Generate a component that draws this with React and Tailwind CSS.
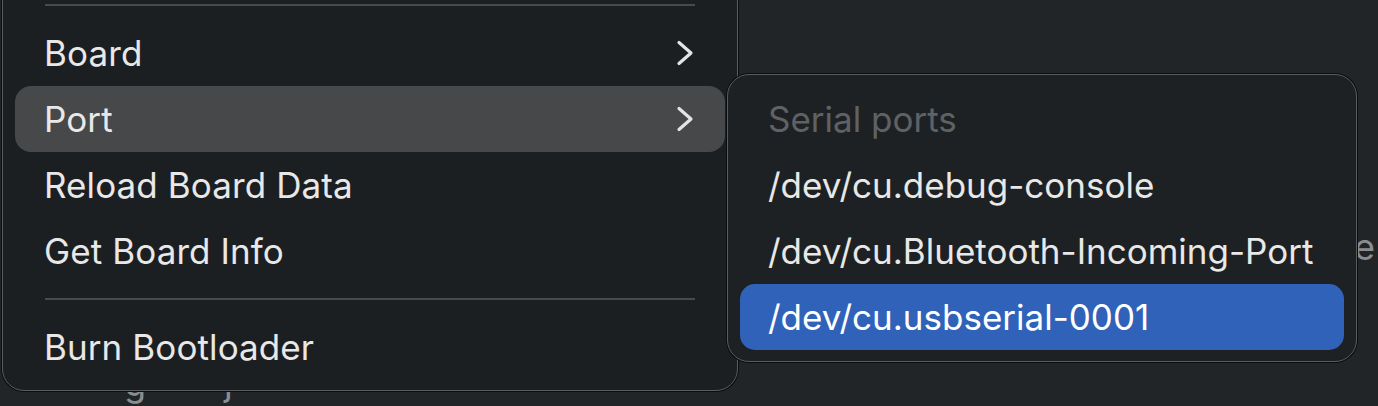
const font = { fontFamily: 'Inter, "Noto Sans", sans-serif' };

function Chevron() {
  return (
    <svg width="18" height="28" viewBox="0 0 18 28" fill="none" stroke="#e4e4e4" strokeWidth="3.2" strokeLinecap="round" strokeLinejoin="round">
      <path d="M3 3.5 L15 14 L3 24.5" />
    </svg>
  );
}

function Separator() {
  return (
    <div className="py-[14px] px-[30px]">
      <div className="h-[2px] bg-[#47494b]"></div>
    </div>
  );
}

function MenuRow({ label, submenu, active }) {
  return (
    <div
      className={
        'flex h-[66px] items-center justify-between rounded-[16px] pl-[29px] pr-[31px] ' +
        (active ? 'bg-[#46484a]' : '')
      }
    >
      <span className="text-[35px] tracking-[0.1px] text-[#e8e8e8]">{label}</span>
      {submenu && <Chevron />}
    </div>
  );
}

function PortRow({ label, selected }) {
  return (
    <div
      className={
        'flex h-[66px] items-center rounded-[15px] pl-[28px] ' +
        (selected ? 'bg-[#2f62b8] text-white' : 'text-[#e8e8e8]')
      }
    >
      <span className="text-[35px] tracking-[0px]">{label}</span>
    </div>
  );
}

export default function App() {
  const ports = ['/dev/cu.debug-console', '/dev/cu.Bluetooth-Incoming-Port', '/dev/cu.usbserial-0001'];

  return (
    <div className="relative h-[406px] w-[1378px] overflow-hidden bg-[#222527]" style={font}>
      {/* window content behind the menus */}
      <div className="absolute left-[360px] top-[120px] h-[90px] w-[160px] rounded-full bg-[#3a2f1c] opacity-60 blur-2xl"></div>
      <span className="absolute left-[1354px] top-[220px] text-[36px] text-[#8b8e91]">e</span>
      <span className="absolute left-[124px] top-[365px] text-[36px] leading-none text-[#8b8e91]">g</span>
      <span className="absolute left-[224px] top-[365px] text-[36px] leading-none text-[#8b8e91]">j</span>

      {/* main menu */}
      <div className="absolute left-[2px] top-[-21px] w-[736px] rounded-[22px] border border-[#5a5c5e] bg-[#1c1f21] px-[12px] pb-[10px] pt-[10px] shadow-[0_0_0_1px_#0b0c0d]">
        <Separator />
        <MenuRow label="Board" submenu />
        <MenuRow label="Port" submenu active />
        <MenuRow label="Reload Board Data" />
        <MenuRow label="Get Board Info" />
        <Separator />
        <MenuRow label="Burn Bootloader" />
      </div>

      {/* port submenu */}
      <div className="absolute left-[727px] top-[74px] w-[630px] rounded-[22px] border border-[#5a5c5e] bg-[#1e2123] px-[12px] py-[11px] shadow-[0_0_0_1px_#0b0c0d]">
        <div className="flex h-[66px] items-center pl-[28px]">
          <span className="text-[35px] text-[#5f6265]">Serial ports</span>
        </div>
        {ports.map((p, i) => (
          <PortRow key={p} label={p} selected={i === ports.length - 1} />
        ))}
      </div>
    </div>
  );
}
